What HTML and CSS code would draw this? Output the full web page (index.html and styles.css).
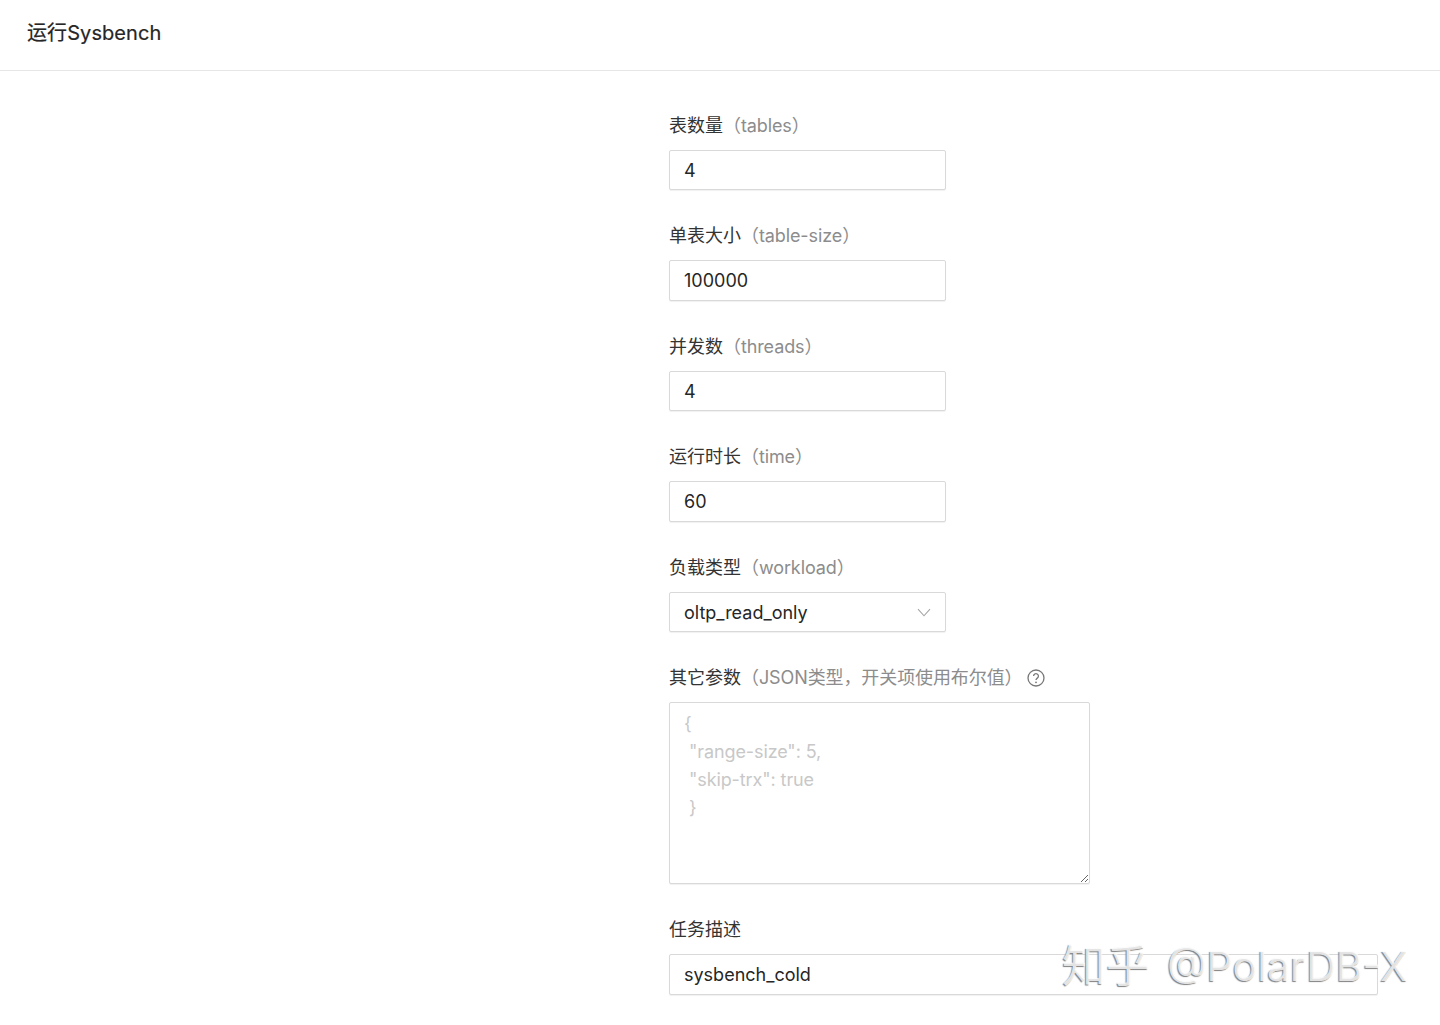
FILE: index.html
```html
<!DOCTYPE html>
<html lang="zh-CN">
<head>
<meta charset="utf-8">
<title>运行Sysbench</title>
<link rel="stylesheet" href="styles.css">
</head>
<body>
<header class="page-header"><h1 class="page-title">运行Sysbench</h1></header>
<main class="form">
  <div class="item">
    <label class="label">表数量<span class="hint">（tables）</span></label>
    <input class="input short" type="text" value="4">
  </div>
  <div class="item">
    <label class="label">单表大小<span class="hint">（table-size）</span></label>
    <input class="input short" type="text" value="100000">
  </div>
  <div class="item">
    <label class="label">并发数<span class="hint">（threads）</span></label>
    <input class="input short" type="text" value="4">
  </div>
  <div class="item">
    <label class="label">运行时长<span class="hint">（time）</span></label>
    <input class="input short" type="text" value="60">
  </div>
  <div class="item">
    <label class="label">负载类型<span class="hint">（workload）</span></label>
    <div class="input short select">
      <span>oltp_read_only</span>
      <svg class="chevron" width="14" height="9" viewBox="0 0 14 9" aria-hidden="true"><path d="M1 1.2 7 7.8 13 1.2" fill="none" stroke="#a6a6a6" stroke-width="1.1"/></svg>
    </div>
  </div>
  <div class="item">
    <label class="label">其它参数<span class="hint">（JSON类型，开关项使用布尔值）</span>
      <svg class="help" width="18" height="18" viewBox="0 0 18 18" aria-hidden="true"><circle cx="9" cy="9" r="8" fill="none" stroke="#777" stroke-width="1.3"/><path d="M6.6 7.1a2.4 2.4 0 1 1 3.7 2c-.9.6-1.3 1-1.3 2" fill="none" stroke="#777" stroke-width="1.3"/><circle cx="9" cy="13.3" r=".9" fill="#777"/></svg>
    </label>
    <textarea class="input area" placeholder="{
 &quot;range-size&quot;: 5,
 &quot;skip-trx&quot;: true
 }"></textarea>
  </div>
  <div class="item">
    <label class="label">任务描述</label>
    <input class="input wide" type="text" value="sysbench_cold">
  </div>
</main>
<div class="watermark"><span class="wm-cn">知乎</span><span class="wm-en">@PolarDB-X</span></div>
</body>
</html>
```
FILE: styles.css
```css
* { box-sizing: border-box; }
html, body { height: 100%; }
body {
  margin: 0;
  position: relative;
  overflow: hidden;
  background: #fff;
  color: #262626;
  font-family: Inter, "Noto Sans CJK SC", sans-serif;
  font-size: 18px;
}
.page-header {
  height: 71px;
  padding-left: 27px;
  display: flex;
  align-items: center;
  border-bottom: 1px solid #e6e6e6;
}
.page-title {
  margin: 0 0 4px;
  font-size: 20px;
  font-weight: 400;
  line-height: 28px;
  letter-spacing: .08px;
  -webkit-text-stroke: .2px #262626;
}
.form {
  margin-left: 669px;
  padding-top: 38.6px;
  display: flex;
  flex-direction: column;
  gap: 30px;
}
.item { display: flex; flex-direction: column; }
.label {
  display: flex;
  align-items: center;
  height: 32px;
  margin-bottom: 8px;
  line-height: 30px;
  font-size: 18px;
  color: #333;
}
.hint { color: #8c8c8c; letter-spacing: -.1px; }
.help { margin-left: 5px; }
.input {
  display: block;
  height: 40.5px;
  padding: 1px 14px 0;
  border: 1px solid #d9d9d9;
  border-radius: 2px;
  background: #fff;
  color: #262626;
  font: inherit;
  font-size: 18px;
  outline: none;
  box-shadow: 0 1px 1px rgba(0,0,0,.06);
}
.short { width: 277px; }
.wide { width: 709px; }
.select {
  display: flex;
  align-items: center;
  justify-content: space-between;
  padding-right: 14px;
}
.area {
  width: 421px;
  height: 182px;
  padding: 7px 14px 6px;
  line-height: 28px;
  letter-spacing: -.1px;
  resize: both;
}
.area::placeholder { color: #c8c8c8; opacity: 1; }
.watermark {
  position: absolute;
  left: 1062px;
  top: 938px;
  display: flex;
  align-items: center;
  gap: 17px;
  line-height: 56px;
  white-space: nowrap;
  color: rgba(255,255,255,.8);
  text-shadow: -1px 1px 1px #808080;
}
.wm-cn { font-size: 44px; }
.wm-en { font-size: 41px; }
```
